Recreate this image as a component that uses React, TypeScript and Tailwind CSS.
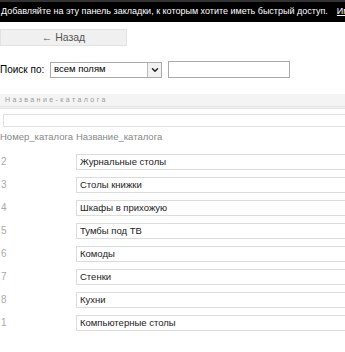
import { ChevronDown } from "lucide-react";

const rows = [
  { id: "2", name: "Журнальные столы" },
  { id: "3", name: "Столы книжки" },
  { id: "4", name: "Шкафы в прихожую" },
  { id: "5", name: "Тумбы под ТВ" },
  { id: "6", name: "Комоды" },
  { id: "7", name: "Стенки" },
  { id: "8", name: "Кухни" },
  { id: "1", name: "Компьютерные столы" },
];

export default function App() {
  return (
    <div className="h-[352px] w-[345px] overflow-hidden bg-white font-['Liberation_Sans',Arial,sans-serif]">
      {/* bookmarks bar */}
      <div className="flex h-[22px] items-center gap-[9px] overflow-hidden whitespace-nowrap border-t-2 border-[#333] bg-black pl-[1px] text-[9px] text-white">
        <span>Добавляйте на эту панель закладки, к которым хотите иметь быстрый доступ.</span>
        <span className="underline">Импо</span>
      </div>

      <button className="mt-[7px] flex h-[17px] w-[127px] items-center justify-center border border-[#e2e2e2] bg-[#f0f0f0] text-[10.5px] text-[#555]">
        ← Назад
      </button>

      {/* search */}
      <div className="mt-[15px] flex h-[17px] items-center text-[10px]">
        <span className="w-[50px] text-black">Поиск по:</span>
        <div className="flex h-[16px] w-[112px] items-center border border-[#aaa] bg-white">
          <span className="flex-1 pl-[3px] text-[9.5px] text-black">всем полям</span>
          <span className="flex h-[14px] w-[14px] items-center justify-center border-l border-[#bbb] bg-[#f2f2f2]">
            <ChevronDown size={10} strokeWidth={3.5} className="text-[#222]" />
          </span>
        </div>
        <div className="ml-[6px] h-[17px] w-[122px] border border-[#aaa] bg-white" />
      </div>

      {/* grid header */}
      <div className="mt-[16px] w-[400px]">
        <div className="flex h-[15px] items-center border-b-[3px] border-double border-[#e4e4e4] bg-[#f4f4f4] pl-[5px] text-[7px] tracking-[2.4px] text-[#999]">
          Название-каталога
        </div>
        <div className="ml-[3px] mt-[5px] h-[13px] border border-[#e0e0e0] bg-white" />
        <div className="mt-[2px] flex h-[16px] items-center whitespace-nowrap text-[9.5px] text-[#888]">
          <span className="w-[76px]">Номер_каталога</span>
          <span>Название_каталога</span>
        </div>
      </div>

      {/* rows */}
      <div className="mt-[9px] w-[400px]">
        {rows.map((r) => (
          <div key={r.id} className="flex h-[23px] items-start">
            <span className="w-[76px] pl-[1px] pt-[1px] text-[10px] leading-[14px] text-[#aaa]">{r.id}</span>
            <div className="flex h-[16px] flex-1 items-center border border-[#dcdcdc] bg-white pl-[3px] text-[9.5px] text-[#222]">
              {r.name}
            </div>
          </div>
        ))}
      </div>
    </div>
  );
}
